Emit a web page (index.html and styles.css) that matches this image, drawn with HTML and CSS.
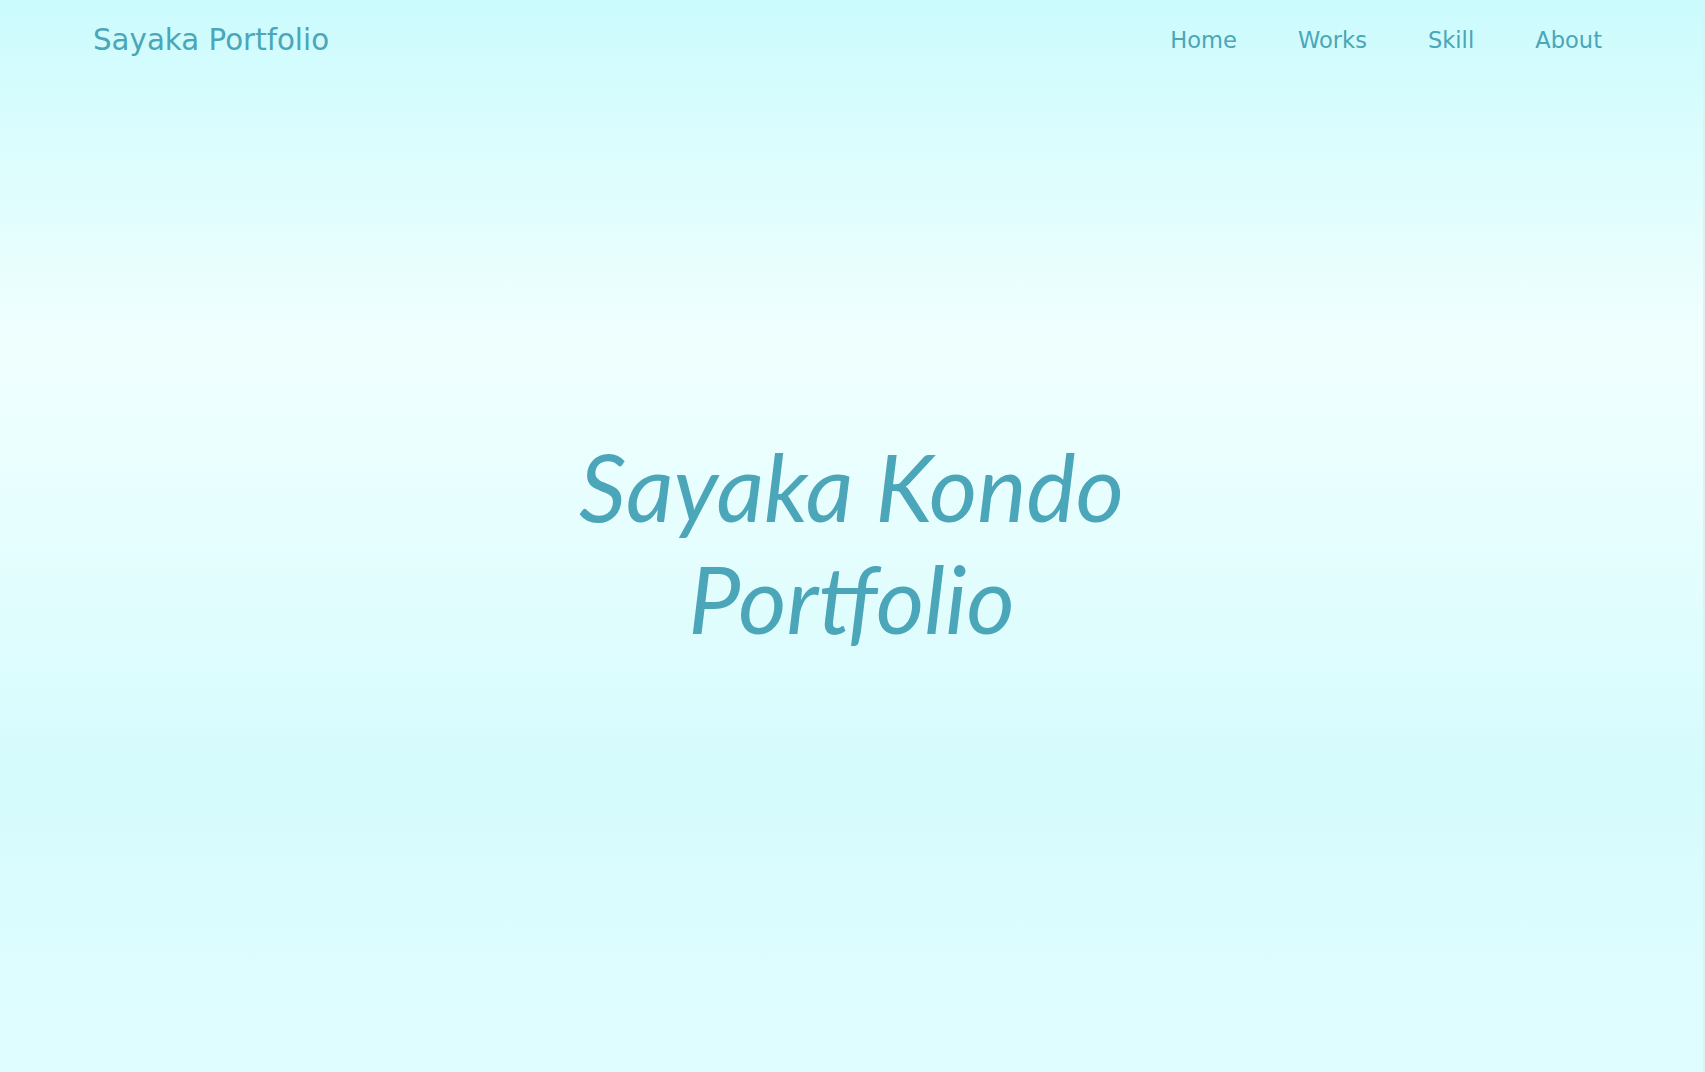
FILE: index.html
```html
<!DOCTYPE html>
<html lang="en">
<head>
<meta charset="utf-8">
<title>Sayaka Portfolio</title>
<link rel="stylesheet" href="styles.css">
</head>
<body>
<div class="page">
  <header class="site-header">
    <a class="logo" href="#">Sayaka Portfolio</a>
    <nav class="nav">
      <a href="#">Home</a>
      <a href="#">Works</a>
      <a href="#">Skill</a>
      <a href="#">About</a>
    </nav>
  </header>
  <main class="hero">
    <h1 class="hero-title">Sayaka Kondo<br>Portfolio</h1>
  </main>
</div>
</body>
</html>
```
FILE: styles.css
```css
html {
  background: #ececec;
}
body {
  margin: 0 2px 0 0;
}
.page {
  height: 1072px;
  display: flex;
  flex-direction: column;
  background: linear-gradient(180deg, #ccfbfd 0%, #f0fffe 32%, #e6fefe 50%, #d5fbfd 72%, #dcfcfe 88%, #e0fdfe 100%);
  color: #4aa6b8;
}
.site-header {
  display: flex;
  justify-content: space-between;
  align-items: center;
  height: 78px;
  padding: 0 100px 0 93px;
}
.site-header a {
  color: #4aa6b8;
  text-decoration: none;
  font-family: "DejaVu Sans", sans-serif;
}
.logo {
  font-size: 29.3px;
  padding-top: 2px;
}
.nav {
  display: flex;
  gap: 61px;
  padding-top: 1px;
  margin-right: 1px;
}
.nav a {
  font-size: 22.6px;
}
.hero {
  flex: 1;
  display: flex;
  align-items: center;
  justify-content: center;
  margin-top: -66px;
}
.hero-title {
  margin: 0;
  text-align: center;
  font-family: Lato, sans-serif;
  font-style: italic;
  font-weight: 400;
  font-size: 93px;
  line-height: 112px;
}
```
